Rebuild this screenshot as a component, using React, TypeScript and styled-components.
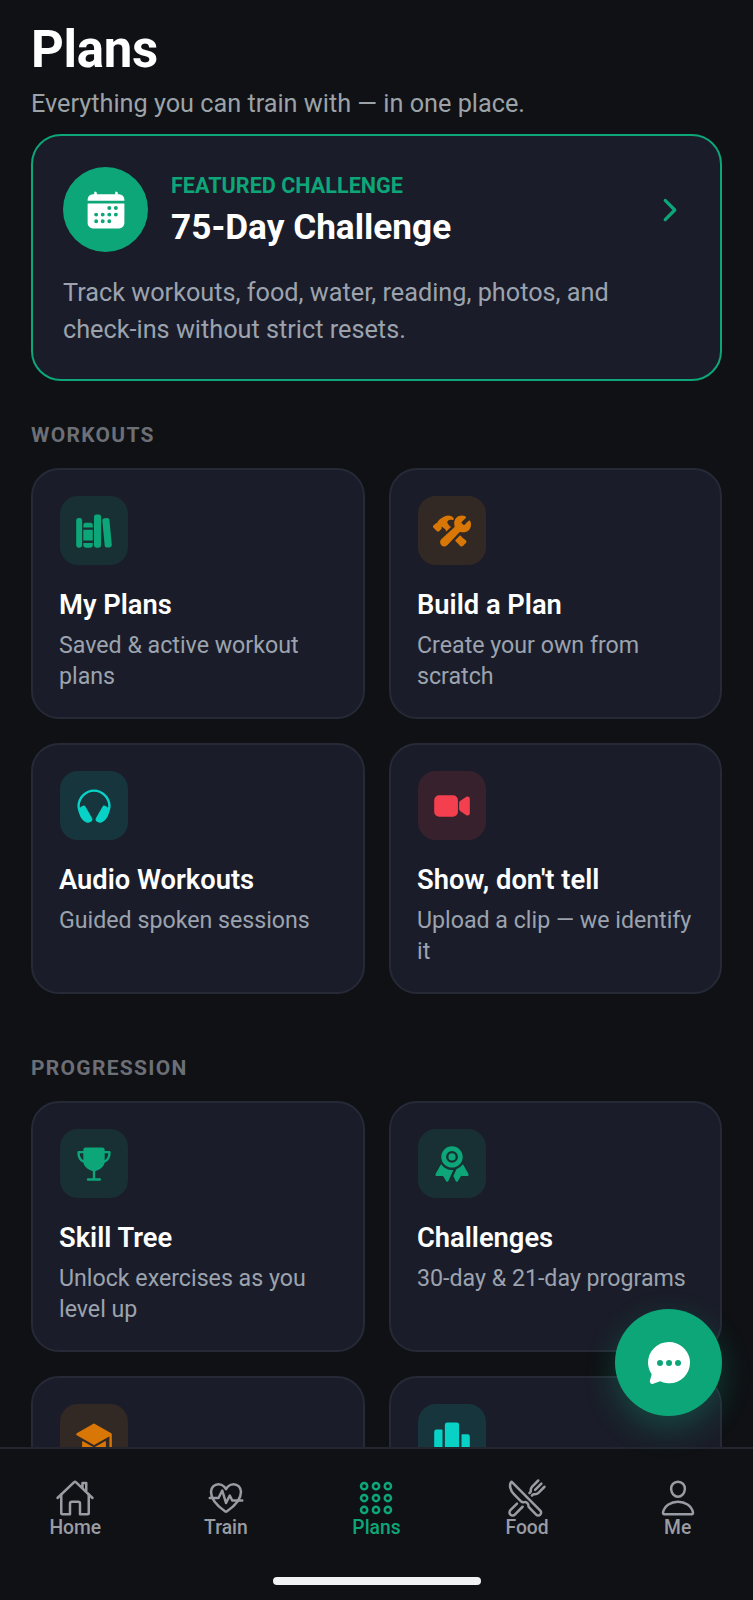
import React from "react";
import styled, { createGlobalStyle } from "styled-components";
import type { IconType } from "react-icons";
import {
  IoAppsOutline,
  IoCalendar,
  IoChatbubbleEllipses,
  IoChevronForward,
  IoConstruct,
  IoFitnessOutline,
  IoHeadset,
  IoHomeOutline,
  IoLibrary,
  IoPersonOutline,
  IoPodium,
  IoRestaurantOutline,
  IoRibbon,
  IoSchool,
  IoTrophy,
  IoVideocam,
} from "react-icons/io5";

const GREEN = "#0da678";
const AMBER = "#d97706";
const TEAL = "#08d2c6";
const RED = "#f43f4e";

const GlobalStyle = createGlobalStyle`
  html, body {
    margin: 0;
    padding: 0;
    background: #0f1115;
  }
  * {
    box-sizing: border-box;
  }
`;

const Screen = styled.div`
  position: relative;
  width: 753px;
  height: 1600px;
  display: flex;
  flex-direction: column;
  overflow: hidden;
  background: #0f1115;
  font-family: Roboto, "Liberation Sans", sans-serif;
  color: #fff;
`;

const Content = styled.main`
  flex: 1;
  min-height: 0;
  overflow: hidden;
  padding: 20px 31px 0;
`;

const Title = styled.h1`
  margin: 0;
  font-size: 51px;
  line-height: 60px;
  font-weight: 700;
  letter-spacing: -0.3px;
`;

const Subtitle = styled.p`
  margin: 9px 0 0;
  font-size: 25.25px;
  line-height: 30px;
  font-weight: 400;
  color: #9ca3a8;
`;

const Featured = styled.section`
  margin-top: 15px;
  height: 247px;
  padding: 31px 60px 0 30px;
  background: #1a1d29;
  border: 2px solid ${GREEN};
  border-radius: 30px;
`;

const FeaturedTop = styled.div`
  display: flex;
  align-items: center;
  gap: 23px;
  margin-right: -30px;
`;

const FeaturedBadge = styled.div`
  width: 85px;
  height: 85px;
  flex: none;
  border-radius: 50%;
  background: ${GREEN};
  display: flex;
  align-items: center;
  justify-content: center;
  color: #fff;
`;

const FeaturedText = styled.div`
  flex: 1;
  display: flex;
  flex-direction: column;
  padding-top: 2px;
`;

const Eyebrow = styled.span`
  font-size: 21.6px;
  line-height: 26px;
  font-weight: 700;
  color: ${GREEN};
`;

const FeaturedName = styled.span`
  margin-top: 6px;
  font-size: 35.2px;
  line-height: 44px;
  font-weight: 700;
`;

const Chevron = styled.div`
  display: flex;
  color: ${GREEN};
  margin-right: 3px;
`;

const FeaturedBody = styled.p`
  margin: 22px 0 0;
  font-size: 25.25px;
  line-height: 37px;
  color: #9ca3af;
`;

const SectionLabel = styled.h2<{ $top: number }>`
  margin: ${(p) => p.$top}px 0 0;
  height: 24px;
  font-size: 21px;
  line-height: 24px;
  font-weight: 700;
  letter-spacing: 1.3px;
  color: #6c6f76;
`;

const Grid = styled.div`
  margin-top: 21px;
  display: grid;
  grid-template-columns: 334px 333px;
  grid-auto-rows: 251px;
  gap: 24px;
`;

const Card = styled.article`
  padding: 26px 26px 0;
  background: #1a1d29;
  border: 2px solid #262a36;
  border-radius: 28px;
`;

const IconBox = styled.div<{ $color: string }>`
  width: 68px;
  height: 69px;
  margin-left: 1px;
  border-radius: 18px;
  display: flex;
  align-items: center;
  justify-content: center;
  color: ${(p) => p.$color};
  background: ${(p) => p.$color}22;
`;

const CardName = styled.h3`
  margin: 22px 0 0;
  font-size: 27.3px;
  line-height: 36px;
  font-weight: 600;
`;

const CardDesc = styled.p`
  margin: 7px 0 0;
  font-size: 23.2px;
  line-height: 31px;
  color: #9ca3af;
`;

const Fab = styled.button`
  position: absolute;
  right: 31px;
  bottom: 184px;
  width: 107px;
  height: 107px;
  padding: 0;
  border: 0;
  border-radius: 50%;
  background: ${GREEN};
  color: #fff;
  display: flex;
  align-items: center;
  justify-content: center;
  box-shadow: 0 12px 30px rgba(13, 166, 120, 0.3);
`;

const TabBar = styled.nav`
  flex: none;
  height: 153px;
  border-top: 2px solid #23262f;
  background: #0f1115;
  display: flex;
  flex-direction: column;
  align-items: center;
`;

const Tabs = styled.div`
  width: 100%;
  display: grid;
  grid-template-columns: repeat(5, 1fr);
  padding-top: 29px;
`;

const Tab = styled.div<{ $active?: boolean }>`
  display: flex;
  flex-direction: column;
  align-items: center;
  color: ${(p) => (p.$active ? GREEN : "#9a9ca3")};
`;

const TabLabel = styled.span`
  margin-top: -2px;
  font-size: 19.3px;
  line-height: 24px;
  font-weight: 500;
`;

const HomeIndicator = styled.div`
  margin-top: 37px;
  width: 208px;
  height: 8px;
  border-radius: 4px;
  background: #f1f2f3;
`;

type Item = { id: string; icon: IconType; color: string; name?: string; desc?: string };

const workouts: Item[] = [
  { id: "plans", icon: IoLibrary, color: GREEN, name: "My Plans", desc: "Saved & active workout plans" },
  { id: "build", icon: IoConstruct, color: AMBER, name: "Build a Plan", desc: "Create your own from scratch" },
  { id: "audio", icon: IoHeadset, color: TEAL, name: "Audio Workouts", desc: "Guided spoken sessions" },
  { id: "video", icon: IoVideocam, color: RED, name: "Show, don't tell", desc: "Upload a clip — we identify it" },
];

// last row is cut off by the tab bar, only the icons show
const progression: Item[] = [
  { id: "tree", icon: IoTrophy, color: GREEN, name: "Skill Tree", desc: "Unlock exercises as you level up" },
  { id: "challenges", icon: IoRibbon, color: GREEN, name: "Challenges", desc: "30-day & 21-day programs" },
  { id: "school", icon: IoSchool, color: AMBER },
  { id: "podium", icon: IoPodium, color: TEAL },
];

const tabs: { icon: IconType; label: string; active?: boolean }[] = [
  { icon: IoHomeOutline, label: "Home" },
  { icon: IoFitnessOutline, label: "Train" },
  { icon: IoAppsOutline, label: "Plans", active: true },
  { icon: IoRestaurantOutline, label: "Food" },
  { icon: IoPersonOutline, label: "Me" },
];

function CardGrid({ items }: { items: Item[] }) {
  return (
    <Grid>
      {items.map(({ id, icon: Icon, color, name, desc }) => (
        <Card key={id}>
          <IconBox $color={color}>
            <Icon size={38} />
          </IconBox>
          {name && <CardName>{name}</CardName>}
          {desc && <CardDesc>{desc}</CardDesc>}
        </Card>
      ))}
    </Grid>
  );
}

export default function App() {
  return (
    <Screen>
      <GlobalStyle />
      <Content>
        <Title>Plans</Title>
        <Subtitle>Everything you can train with — in one place.</Subtitle>
        <Featured>
          <FeaturedTop>
            <FeaturedBadge>
              <IoCalendar size={42} />
            </FeaturedBadge>
            <FeaturedText>
              <Eyebrow>FEATURED CHALLENGE</Eyebrow>
              <FeaturedName>75-Day Challenge</FeaturedName>
            </FeaturedText>
            <Chevron>
              <IoChevronForward size={34} />
            </Chevron>
          </FeaturedTop>
          <FeaturedBody>
            Track workouts, food, water, reading, photos, and check-ins without strict resets.
          </FeaturedBody>
        </Featured>
        <SectionLabel $top={42}>WORKOUTS</SectionLabel>
        <CardGrid items={workouts} />
        <SectionLabel $top={62}>PROGRESSION</SectionLabel>
        <CardGrid items={progression} />
      </Content>
      <Fab aria-label="Chat">
        <IoChatbubbleEllipses size={48} />
      </Fab>
      <TabBar>
        <Tabs>
          {tabs.map(({ icon: Icon, label, active }) => (
            <Tab key={label} $active={active}>
              <Icon size={40} />
              <TabLabel>{label}</TabLabel>
            </Tab>
          ))}
        </Tabs>
        <HomeIndicator />
      </TabBar>
    </Screen>
  );
}
